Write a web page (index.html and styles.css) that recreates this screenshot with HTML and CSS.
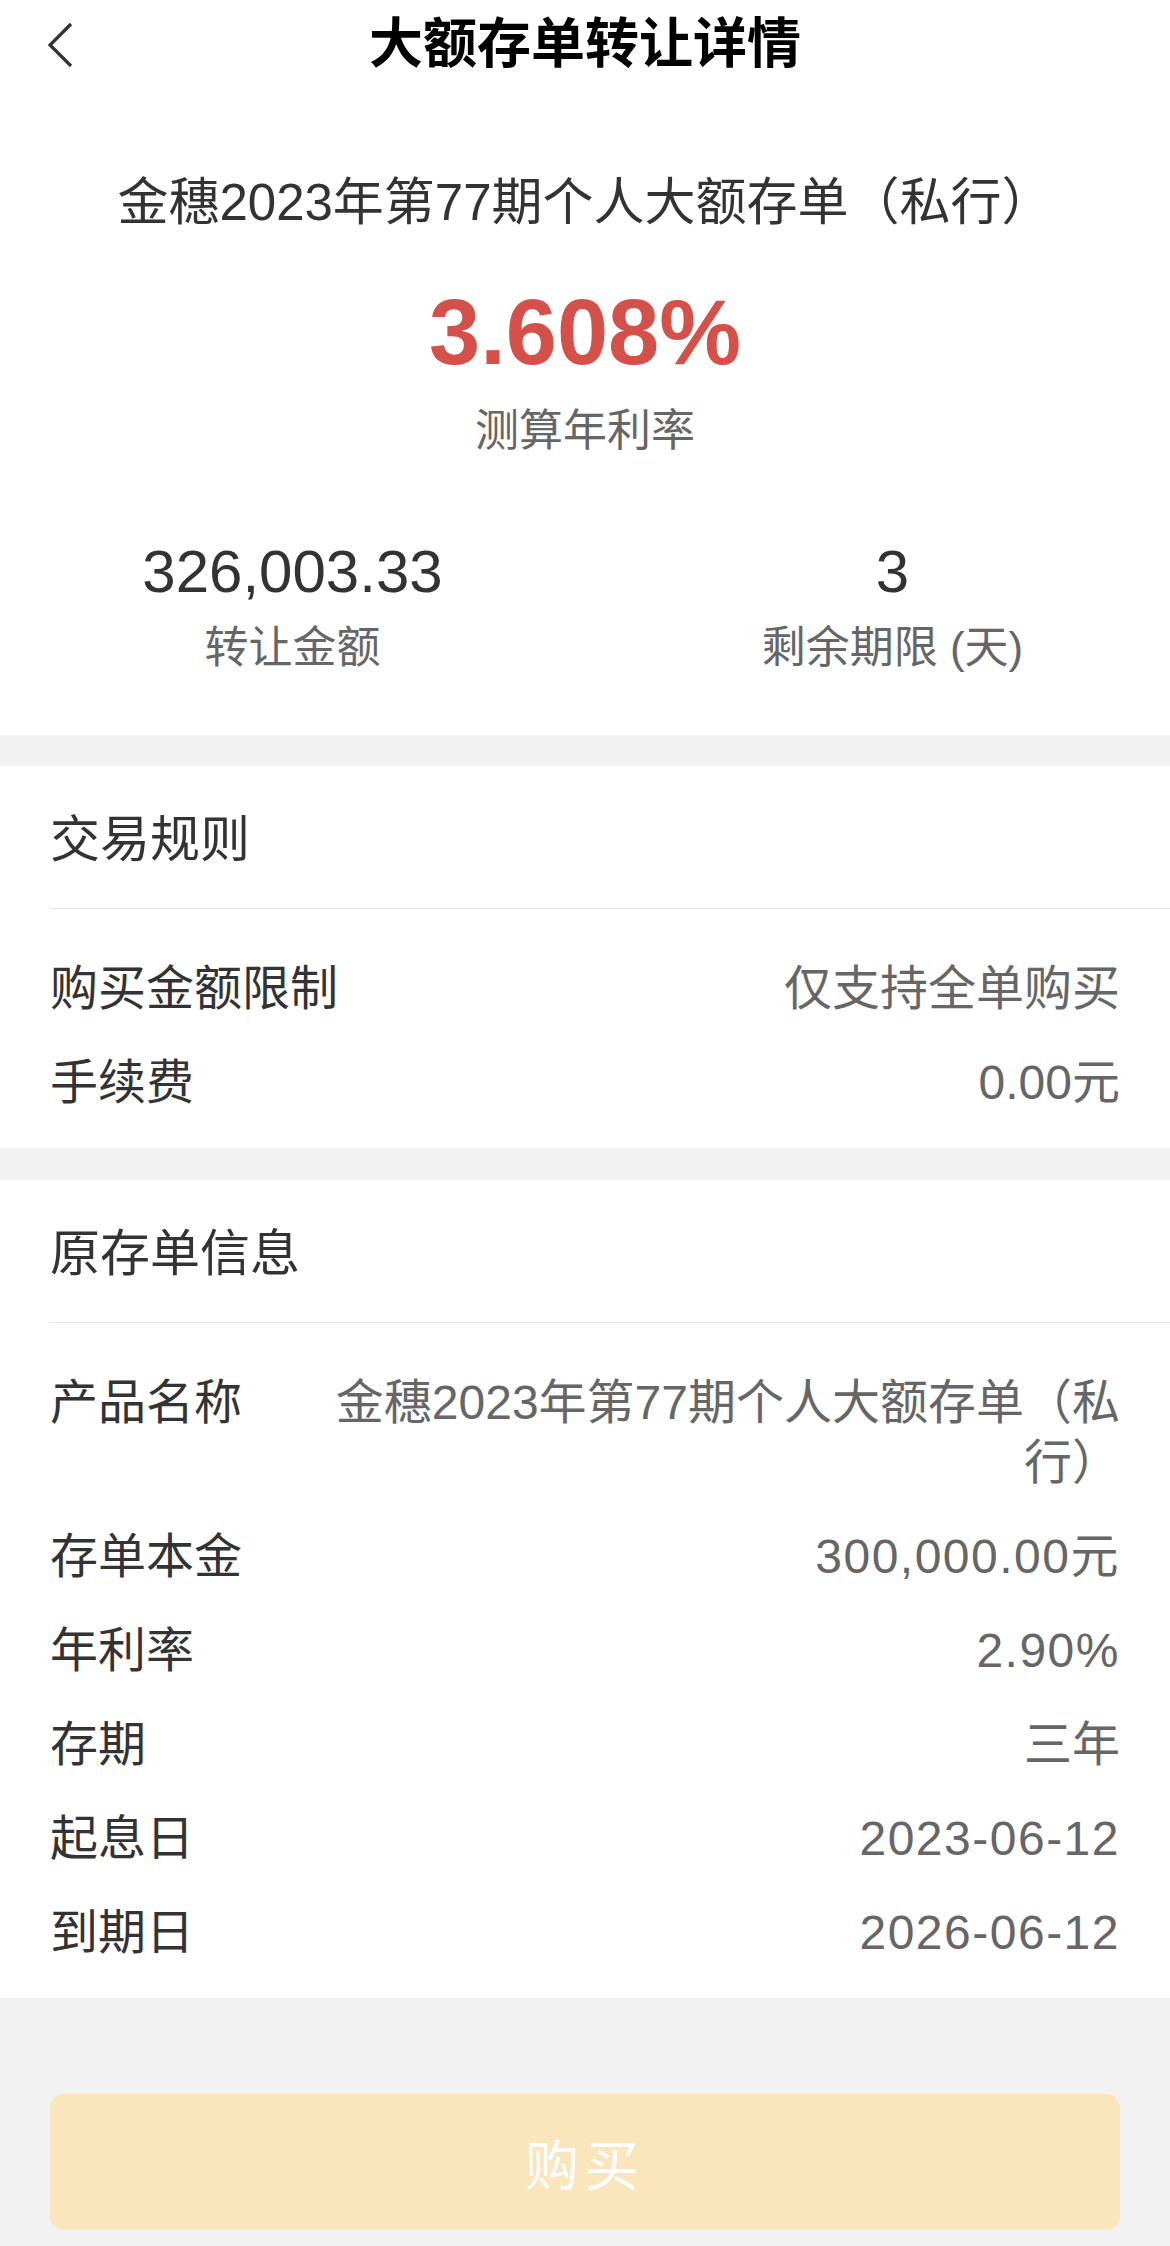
FILE: index.html
```html
<!DOCTYPE html>
<html lang="zh-CN">
<head>
    <meta charset="UTF-8">
    <meta name="viewport" content="width=device-width, initial-scale=1.0">
    <title>大额存单转让详情</title>
    <link rel="stylesheet" href="styles.css">
</head>
<body>
  <div class="nav">
    <div class="nav-back">
      <svg width="30" height="50" viewBox="0 0 30 50">
        <polyline points="24,4 3,25 24,46" fill="none" stroke="#333333" stroke-width="3.2" stroke-linejoin="miter"/>
      </svg>
    </div>
    <h1>大额存单转让详情</h1>
    <div></div>
  </div>

  <div class="summary">
    <p class="product-title">金穗2023年第77期个人大额存单（私行）</p>
    <p class="rate">3.608%</p>
    <p class="rate-label">测算年利率</p>

    <div class="stats">
      <div class="stat">
        <p class="stat-value">326,003.33</p>
        <p class="stat-label">转让金额</p>
      </div>
      <div class="stat stat-right">
        <p class="stat-value">3</p>
        <p class="stat-label">剩余期限 (天)</p>
      </div>
    </div>
  </div>

  <div class="section">
    <div class="section-header">交易规则</div>
    <div class="section-rows">
      <div class="row">
        <span class="row-label">购买金额限制</span>
        <span class="row-value">仅支持全单购买</span>
      </div>
      <div class="row">
        <span class="row-label">手续费</span>
        <span class="row-value">0.00元</span>
      </div>
    </div>
  </div>

  <div class="section">
    <div class="section-header">原存单信息</div>
    <div class="section-rows">
      <div class="row">
        <span class="row-label">产品名称</span>
        <span class="row-value">金穗2023年第77期个人大额存单（私行）</span>
      </div>
      <div class="row">
        <span class="row-label">存单本金</span>
        <span class="row-value num">300,000.00元</span>
      </div>
      <div class="row">
        <span class="row-label">年利率</span>
        <span class="row-value num">2.90%</span>
      </div>
      <div class="row">
        <span class="row-label">存期</span>
        <span class="row-value">三年</span>
      </div>
      <div class="row">
        <span class="row-label">起息日</span>
        <span class="row-value num">2023-06-12</span>
      </div>
      <div class="row">
        <span class="row-label">到期日</span>
        <span class="row-value num">2026-06-12</span>
      </div>
    </div>
  </div>

  <div class="footer">
    <button class="button-buy" disabled>购买</button>
  </div>
</body>
</html>
```

FILE: styles.css
```css
body {
    margin: 0px;
    font-family: "Liberation Sans", "Noto Sans CJK SC", sans-serif;
    background-color: #f2f2f2;
    color: #333333;
    min-height: 100vh;
}

p {
    margin: 0px;
}

.nav {
    height: 88px;
    display: grid;
    grid-template-columns: 1fr auto 1fr;
    align-items: center;
    background-color: #ffffff;
}

.nav-back {
    padding-left: 47px;
    padding-top: 2px;
    display: flex;
    align-items: center;
}

h1 {
    margin: 0px;
    font-size: 54px;
    font-weight: bold;
    color: #000000;
    line-height: 60px;
}

.summary {
    background-color: #ffffff;
    padding-top: 85px;
    padding-bottom: 59px;
    text-align: center;
}

.product-title {
    font-size: 51px;
    line-height: 60px;
    color: #333333;
}

.rate {
    margin-top: 49px;
    font-size: 92px;
    line-height: 100px;
    font-weight: bold;
    color: #d6504a;
}

.rate-label {
    margin-top: 21px;
    font-size: 44px;
    line-height: 56px;
    color: #666666;
}

.stats {
    margin-top: 78px;
    display: grid;
    grid-template-columns: 1fr 1fr;
}

.stat-right {
    padding-left: 30px;
}

.stat-value {
    font-size: 60px;
    line-height: 70px;
    color: #333333;
}

.stat-label {
    margin-top: 13px;
    font-size: 44px;
    line-height: 56px;
    color: #666666;
}

.section {
    margin-top: 31px;
    background-color: #ffffff;
}

.section + .section {
    margin-top: 32px;
}

.section-header {
    margin-left: 50px;
    padding: 44px 50px 38px 0px;
    font-size: 50px;
    line-height: 60px;
    color: #333333;
    border-bottom: 1px solid #e6e6e6;
}

.section-rows {
    padding: 33px 50px 18px 50px;
}

.row {
    display: flex;
    justify-content: space-between;
    padding: 17px 0px;
    font-size: 48px;
    line-height: 60px;
}

.row-label {
    flex-shrink: 0;
    color: #333333;
}

.row-value {
    flex: 1;
    margin-left: 80px;
    text-align: right;
    color: #666666;
}

.num {
    letter-spacing: 1.5px;
}

.footer {
    padding: 96px 50px 16px 50px;
}

.button-buy {
    width: 100%;
    height: 136px;
    border: 0px;
    border-radius: 14px;
    background-color: #fbe5bb;
    color: #ffffff;
    font-family: "Liberation Sans", "Noto Sans CJK SC", sans-serif;
    font-size: 54px;
    letter-spacing: 6px;
    padding-left: 6px;
}
```
